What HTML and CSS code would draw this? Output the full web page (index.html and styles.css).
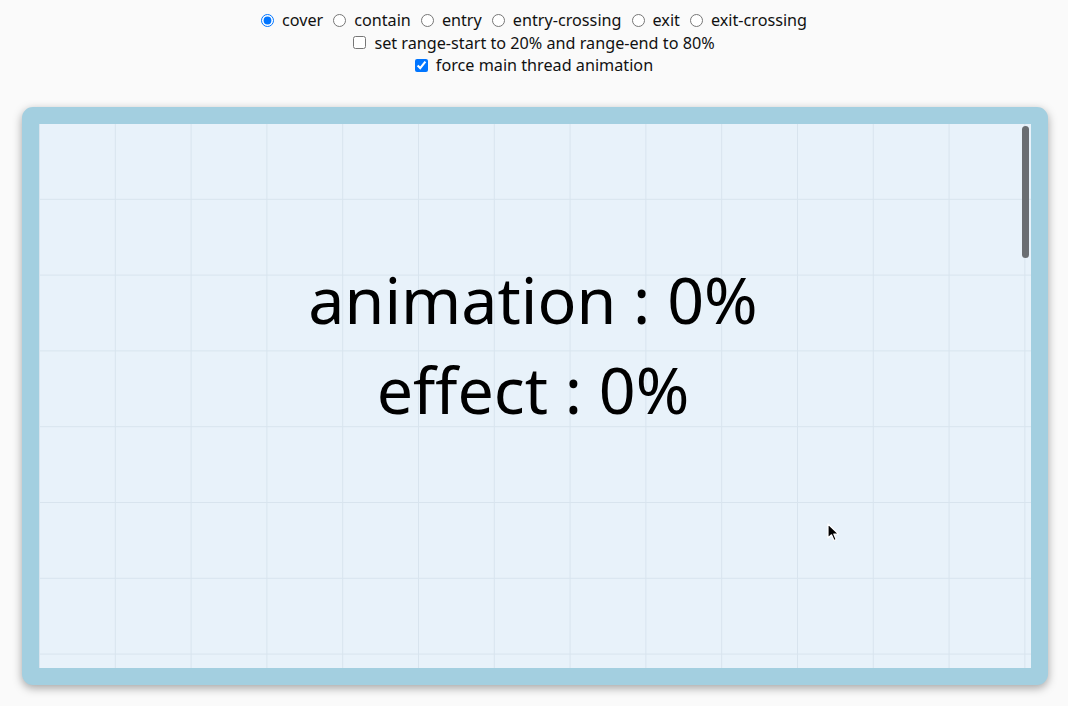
FILE: index.html
```html
<!DOCTYPE html>
<html>
<head>
<meta charset="utf-8">
<link rel="stylesheet" href="styles.css">
</head>
<body>
<div class="controls">
  <div class="row">
    <label><input type="radio" name="r" checked> cover</label>
    <label><input type="radio" name="r"> contain</label>
    <label><input type="radio" name="r"> entry</label>
    <label><input type="radio" name="r"> entry-crossing</label>
    <label><input type="radio" name="r"> exit</label>
    <label><input type="radio" name="r"> exit-crossing</label>
  </div>
  <div class="row">
    <label><input type="checkbox"> set range-start to 20% and range-end to 80%</label>
  </div>
  <div class="row">
    <label><input type="checkbox" checked> force main thread animation</label>
  </div>
</div>
<div class="frame">
  <div class="viewport">
    <div class="readout">
      <div>animation : 0%</div>
      <div>effect : 0%</div>
    </div>
    <div class="scrollbar"></div>
  </div>
  <svg class="cursor" width="14" height="20" viewBox="0 0 14 20">
    <path d="M1 1 L1 15 L4.5 11.8 L7 17.5 L9.2 16.5 L6.8 11 L11.5 11 Z" fill="#000" stroke="#fff" stroke-width="1.2" stroke-linejoin="round"/>
  </svg>
</div>
</body>
</html>
```
FILE: styles.css
```css
html, body {
  margin: 0;
  padding: 0;
  background: #fafafa;
}
body {
  font-family: "Noto Sans", "Liberation Sans", sans-serif;
  color: #111;
  padding-top: 9px;
}
.controls {
  display: flex;
  flex-direction: column;
  align-items: center;
  font-size: 16.2px;
  line-height: 22.5px;
}
.row {
  display: flex;
  justify-content: center;
  gap: 10px;
}
.row label {
  display: flex;
  align-items: center;
}
.row input {
  margin: 0 8px 0 0;
  width: 13px;
  height: 13px;
}
.frame {
  position: relative;
  margin: 30px 20px 20px 22px;
  height: 578px;
  box-sizing: border-box;
  border: 17px solid #a3cfe0;
  border-radius: 11px;
  background: #a3cfe0;
  box-shadow: 0 3px 10px rgba(0, 0, 0, 0.35);
}
.viewport {
  position: relative;
  height: 100%;
  background-color: #e8f2fa;
  background-image:
    linear-gradient(to right, transparent 74.8px, #d8e4ee 74.8px),
    linear-gradient(to bottom, transparent 74.8px, #d8e4ee 74.8px);
  background-size: 75.8px 100%, 100% 75.8px;
  background-position: 1px 0, 0 0;
  display: flex;
  align-items: center;
  justify-content: center;
  overflow: hidden;
}
.readout {
  font-family: "Noto Sans", "Liberation Sans", sans-serif;
  font-size: 64.5px;
  line-height: 90px;
  text-align: center;
  color: #000;
  margin-top: -103px;
  margin-left: -4px;
}
.scrollbar {
  position: absolute;
  right: 2px;
  top: 2px;
  width: 7px;
  height: 132px;
  border-radius: 4px;
  background: #6a6e72;
}
.cursor {
  position: absolute;
  left: 788px;
  top: 399px;
}
```
